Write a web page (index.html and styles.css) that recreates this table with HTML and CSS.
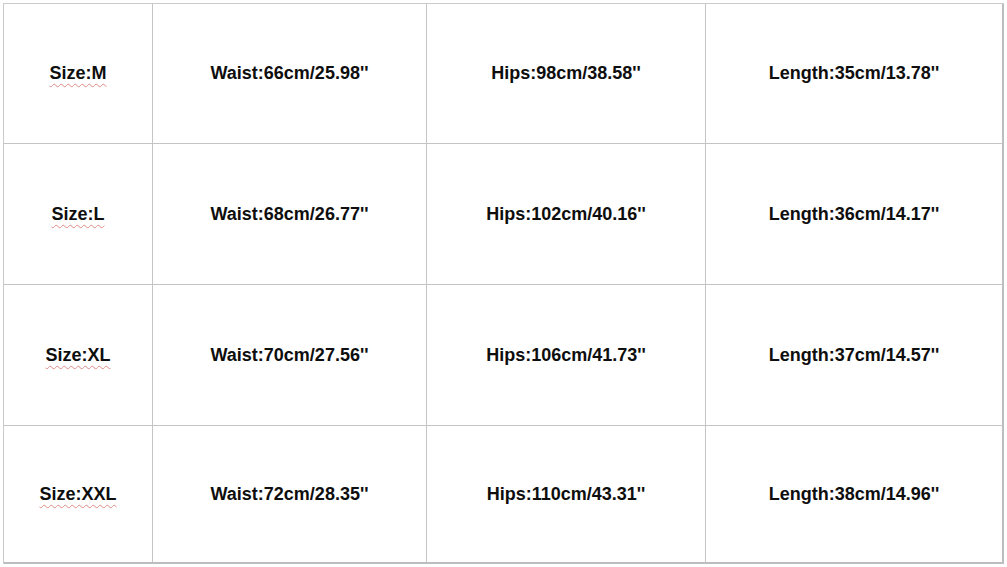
FILE: index.html
```html
<!DOCTYPE html>
<html>
<head>
<meta charset="utf-8">
<link rel="stylesheet" href="styles.css">
</head>
<body>
<div class="chart">
  <div class="cell"><span class="size">Size:M</span></div>
  <div class="cell">Waist:66cm/25.98''</div>
  <div class="cell">Hips:98cm/38.58''</div>
  <div class="cell">Length:35cm/13.78''</div>

  <div class="cell"><span class="size">Size:L</span></div>
  <div class="cell">Waist:68cm/26.77''</div>
  <div class="cell">Hips:102cm/40.16''</div>
  <div class="cell">Length:36cm/14.17''</div>

  <div class="cell"><span class="size">Size:XL</span></div>
  <div class="cell">Waist:70cm/27.56''</div>
  <div class="cell">Hips:106cm/41.73''</div>
  <div class="cell">Length:37cm/14.57''</div>

  <div class="cell"><span class="size">Size:XXL</span></div>
  <div class="cell">Waist:72cm/28.35''</div>
  <div class="cell">Hips:110cm/43.31''</div>
  <div class="cell">Length:38cm/14.96''</div>
</div>
</body>
</html>
```
FILE: styles.css
```css
html, body {
  margin: 0;
  padding: 0;
  background: #ffffff;
}
body {
  padding: 3px 0 0 3px;
  font-family: "Liberation Sans", Arial, sans-serif;
}
.chart {
  display: grid;
  grid-template-columns: 149px 274px 279px 298px;
  grid-template-rows: 140px 141px 141px 138px;
  width: 1001px;
  border-top: 1px solid #cbcbcb;
  border-left: 1px solid #cbcbcb;
  box-sizing: border-box;
}
.cell {
  display: flex;
  align-items: center;
  justify-content: center;
  border-right: 1px solid #c4c4c4;
  border-bottom: 1px solid #c4c4c4;
  font-size: 18px;
  font-weight: bold;
  color: #0e0e0e;
}
.cell:nth-child(4n) {
  border-right: 2px solid #bdbdbd;
}
.cell:nth-child(n+13) {
  border-bottom: 2px solid #bdbdbd;
}
.size {
  text-decoration: underline wavy #e08a8a;
  text-decoration-thickness: 1px;
  text-underline-offset: 4px;
}
```
